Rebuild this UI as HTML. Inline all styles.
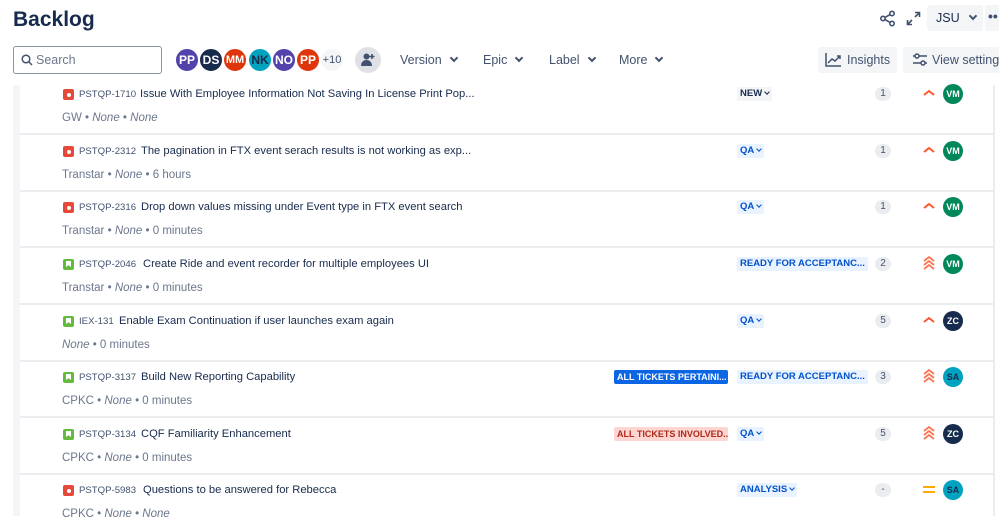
<!DOCTYPE html>
<html><head><meta charset="utf-8"><style>
*{margin:0;padding:0;box-sizing:border-box}
body{width:999px;height:516px;overflow:hidden;background:#fff;font-family:"Liberation Sans",sans-serif;color:#172b4d;position:relative}
.a{position:absolute}
.av{position:absolute;width:26px;height:26px;border-radius:50%;color:#fff;font-size:12px;font-weight:bold;display:flex;align-items:center;justify-content:center;border:2px solid #fff;top:47px}
.flt{position:absolute;top:53px;font-size:12.5px;color:#42526e}
.chev{display:inline-block;width:6px;height:6px;border-right:2px solid #42526e;border-bottom:2px solid #42526e;transform:rotate(45deg);margin-left:9px;position:relative;top:-3px}
.row{position:absolute;left:20px;width:974px;height:57px;border-bottom:2px solid #ebecf0}
.ic{position:absolute;left:43px;top:11px;width:11px;height:11px;border-radius:2px}
.bug{background:#e5493a}
.bug:after{content:"";position:absolute;left:3.5px;top:3.5px;width:4px;height:4px;border-radius:50%;background:#fff}
.story{background:#63ba3c}
.story:after{content:"";position:absolute;left:3px;top:2px;width:5px;height:6px;background:#fff;clip-path:polygon(0 0,100% 0,100% 100%,50% 70%,0 100%)}
.key{position:absolute;left:59px;top:11px;font-size:9.6px;color:#42526e}
.tt{position:absolute;top:10px;font-size:11.2px;color:#172b4d;white-space:nowrap}
.meta{position:absolute;left:42px;top:34px;font-size:11.5px;color:#6b778c}
.meta i{font-style:italic}
.st{position:absolute;left:717px;top:9px;height:14px;font-size:9.5px;font-weight:bold;padding:0 3px;line-height:14px;border-radius:2px;background:#e9f2ff;color:#0052cc}
.st.g{background:#f4f5f7;color:#172b4d}
.st b{display:inline-block;width:4px;height:4px;border-right:1.5px solid currentColor;border-bottom:1.5px solid currentColor;transform:rotate(45deg);margin-left:3px;position:relative;top:-2px}
.est{position:absolute;left:855px;top:9px;width:16px;height:14px;border-radius:7px;background:#ebecf0;font-size:10px;color:#42526e;text-align:center;line-height:14px}
.pr{position:absolute;left:902px;top:7px}
.as{position:absolute;left:923px;top:6px;width:20px;height:20px;border-radius:50%;color:#fff;font-size:9px;font-weight:bold;display:flex;align-items:center;justify-content:center}
.lab{position:absolute;top:9px;height:14px;left:594px;width:114px;font-size:9px;font-weight:bold;line-height:14px;padding:0 3px;border-radius:2px;white-space:nowrap;overflow:hidden}
</style></head><body>
<div class="a" style="left:13px;top:8px;font-size:21px;font-weight:bold;color:#172b4d">Backlog</div>

<svg class="a" style="left:879px;top:10px" width="17" height="17" viewBox="0 0 17 17" fill="none" stroke="#42526e" stroke-width="1.6"><circle cx="13" cy="3.5" r="2.2"/><circle cx="4" cy="8.5" r="2.2"/><circle cx="13" cy="13.5" r="2.2"/><path d="M6 7.4l5-2.8M6 9.6l5 2.8"/></svg>
<svg class="a" style="left:906px;top:11px" width="15" height="15" viewBox="0 0 15 15" fill="none" stroke="#42526e" stroke-width="1.6"><path d="M9 1.5h4.5V6M13.5 1.5L9 6M6 13.5H1.5V9M1.5 13.5L6 9"/></svg>
<div class="a" style="left:927px;top:5px;width:56px;height:26px;background:#f4f5f7;border-radius:3px;font-size:12.5px;line-height:26px;padding-left:9px;color:#172b4d">JSU<span class="chev" style="margin-left:10px"></span></div>
<div class="a" style="left:985px;top:5px;width:20px;height:26px;background:#f4f5f7;border-radius:3px;font-size:14px;line-height:22px;color:#42526e;padding-left:3px;font-weight:bold">••</div>

<div class="a" style="left:13px;top:46px;width:149px;height:28px;border:1.5px solid #8993a4;border-radius:3px"></div>
<svg class="a" style="left:21px;top:54px" width="12" height="12" viewBox="0 0 12 12" fill="none" stroke="#42526e" stroke-width="1.5"><circle cx="5" cy="5" r="3.8"/><path d="M8 8l3 3"/></svg>
<div class="a" style="left:36px;top:53px;font-size:12.5px;color:#6b778c">Search</div>

<div class="av" style="left:174px;background:#5243aa">PP</div>
<div class="av" style="left:198px;background:#172b4d">DS</div>
<div class="av" style="left:222px;background:#de350b;font-size:11px">MM</div>
<div class="av" style="left:247px;background:#00a3bf;color:#172b4d">NK</div>
<div class="av" style="left:271px;background:#5243aa">NO</div>
<div class="av" style="left:295px;background:#de350b">PP</div>
<div class="av" style="left:319px;background:#f4f5f7;color:#42526e;font-weight:normal;font-size:11px">+10</div>
<div class="a" style="left:355px;top:47px;width:26px;height:26px;border-radius:50%;background:#dfe1e6"></div>
<svg class="a" style="left:360px;top:52px" width="16" height="16" viewBox="0 0 16 16" fill="#42526e"><circle cx="6.5" cy="4.5" r="3"/><path d="M1 14c0-4 2.5-6 5.5-6s5.5 2 5.5 6z"/><path d="M12 2v5M9.5 4.5h5" stroke="#42526e" stroke-width="1.6"/></svg>
<div class="flt" style="left:400px">Version<span class="chev"></span></div>
<div class="flt" style="left:483px">Epic<span class="chev"></span></div>
<div class="flt" style="left:549px">Label<span class="chev"></span></div>
<div class="flt" style="left:619px">More<span class="chev"></span></div>

<div class="a" style="left:818px;top:47px;width:79px;height:26px;background:#f4f5f7;border-radius:3px"></div>
<svg class="a" style="left:825px;top:52px" width="17" height="15" viewBox="0 0 17 15" fill="none" stroke="#42526e" stroke-width="1.5"><path d="M1 1v13h15M3 11l4-4 3 2 5-5M12 4h3v3"/></svg>
<div class="a" style="left:847px;top:53px;font-size:12.5px;color:#42526e">Insights</div>
<div class="a" style="left:903px;top:47px;width:100px;height:26px;background:#f4f5f7;border-radius:3px"></div>
<svg class="a" style="left:912px;top:52px" width="16" height="15" viewBox="0 0 16 15" fill="none" stroke="#42526e" stroke-width="1.5"><path d="M1 4h14M1 11h14"/><circle cx="5" cy="4" r="2" fill="#f4f5f7"/><circle cx="11" cy="11" r="2" fill="#f4f5f7"/></svg>
<div class="a" style="left:932px;top:53px;font-size:12.5px;color:#42526e;white-space:nowrap">View settings</div>

<div class="a" style="left:13px;top:85px;width:7px;height:431px;background:#f4f5f7"></div>
<div class="a" style="left:993px;top:85px;width:2px;height:431px;background:#ebecf0"></div>

<div class="row" style="top:78px">
<div class="ic bug"></div><div class="key">PSTQP-1710</div><div class="tt" style="left:120px">Issue With Employee Information Not Saving In License Print Pop...</div>
<div class="meta">GW • <i>None</i> • <i>None</i></div>
<div class="st g">NEW<b></b></div><div class="est">1</div>
<svg class="pr" width="14" height="16" viewBox="0 0 14 16" fill="none" stroke="#ff5630" stroke-width="2"><path d="M2 10l5-4 5 4"/></svg>
<div class="as" style="background:#00875a">VM</div></div>

<div class="row" style="top:135px">
<div class="ic bug"></div><div class="key">PSTQP-2312</div><div class="tt" style="left:121px">The pagination in FTX event serach results is not working as exp...</div>
<div class="meta">Transtar • <i>None</i> • 6 hours</div>
<div class="st">QA<b></b></div><div class="est">1</div>
<svg class="pr" width="14" height="16" viewBox="0 0 14 16" fill="none" stroke="#ff5630" stroke-width="2"><path d="M2 10l5-4 5 4"/></svg>
<div class="as" style="background:#00875a">VM</div></div>

<div class="row" style="top:191px">
<div class="ic bug"></div><div class="key">PSTQP-2316</div><div class="tt" style="left:121px">Drop down values missing under Event type in FTX event search</div>
<div class="meta">Transtar • <i>None</i> • 0 minutes</div>
<div class="st">QA<b></b></div><div class="est">1</div>
<svg class="pr" width="14" height="16" viewBox="0 0 14 16" fill="none" stroke="#ff5630" stroke-width="2"><path d="M2 10l5-4 5 4"/></svg>
<div class="as" style="background:#00875a">VM</div></div>

<div class="row" style="top:248px">
<div class="ic story"></div><div class="key">PSTQP-2046</div><div class="tt" style="left:123px">Create Ride and event recorder for multiple employees UI</div>
<div class="meta">Transtar • <i>None</i> • 0 minutes</div>
<div class="st">READY FOR ACCEPTANC...</div><div class="est">2</div>
<svg class="pr" width="14" height="16" viewBox="0 0 14 16" fill="none" stroke="#ff7452" stroke-width="1.8"><path d="M2 6l5-4 5 4M2 10l5-4 5 4M2 14l5-4 5 4"/></svg>
<div class="as" style="background:#00875a">VM</div></div>

<div class="row" style="top:305px">
<div class="ic story"></div><div class="key">IEX-131</div><div class="tt" style="left:99px">Enable Exam Continuation if user launches exam again</div>
<div class="meta"><i>None</i> • 0 minutes</div>
<div class="st">QA<b></b></div><div class="est">5</div>
<svg class="pr" width="14" height="16" viewBox="0 0 14 16" fill="none" stroke="#ff5630" stroke-width="2"><path d="M2 10l5-4 5 4"/></svg>
<div class="as" style="background:#172b4d">ZC</div></div>

<div class="row" style="top:361px">
<div class="ic story"></div><div class="key">PSTQP-3137</div><div class="tt" style="left:121px">Build New Reporting Capability</div>
<div class="meta">CPKC • <i>None</i> • 0 minutes</div>
<div class="lab" style="background:#0c66e4;color:#fff">ALL TICKETS PERTAINI...</div>
<div class="st">READY FOR ACCEPTANC...</div><div class="est">3</div>
<svg class="pr" width="14" height="16" viewBox="0 0 14 16" fill="none" stroke="#ff7452" stroke-width="1.8"><path d="M2 6l5-4 5 4M2 10l5-4 5 4M2 14l5-4 5 4"/></svg>
<div class="as" style="background:#00a3bf;color:#172b4d">SA</div></div>

<div class="row" style="top:418px">
<div class="ic story"></div><div class="key">PSTQP-3134</div><div class="tt" style="left:121px">CQF Familiarity Enhancement</div>
<div class="meta">CPKC • <i>None</i> • 0 minutes</div>
<div class="lab" style="background:#ffd5d2;color:#ae2a19">ALL TICKETS INVOLVED...</div>
<div class="st">QA<b></b></div><div class="est">5</div>
<svg class="pr" width="14" height="16" viewBox="0 0 14 16" fill="none" stroke="#ff7452" stroke-width="1.8"><path d="M2 6l5-4 5 4M2 10l5-4 5 4M2 14l5-4 5 4"/></svg>
<div class="as" style="background:#172b4d">ZC</div></div>

<div class="row" style="top:474px;border-bottom:none">
<div class="ic bug"></div><div class="key">PSTQP-5983</div><div class="tt" style="left:123px">Questions to be answered for Rebecca</div>
<div class="meta">CPKC • <i>None</i> • <i>None</i></div>
<div class="st">ANALYSIS<b></b></div><div class="est">-</div>
<svg class="pr" width="14" height="16" viewBox="0 0 14 16" fill="none" stroke="#ffab00" stroke-width="2"><path d="M1 6h12M1 11h12"/></svg>
<div class="as" style="background:#00a3bf;color:#172b4d">SA</div></div>
</body></html>
